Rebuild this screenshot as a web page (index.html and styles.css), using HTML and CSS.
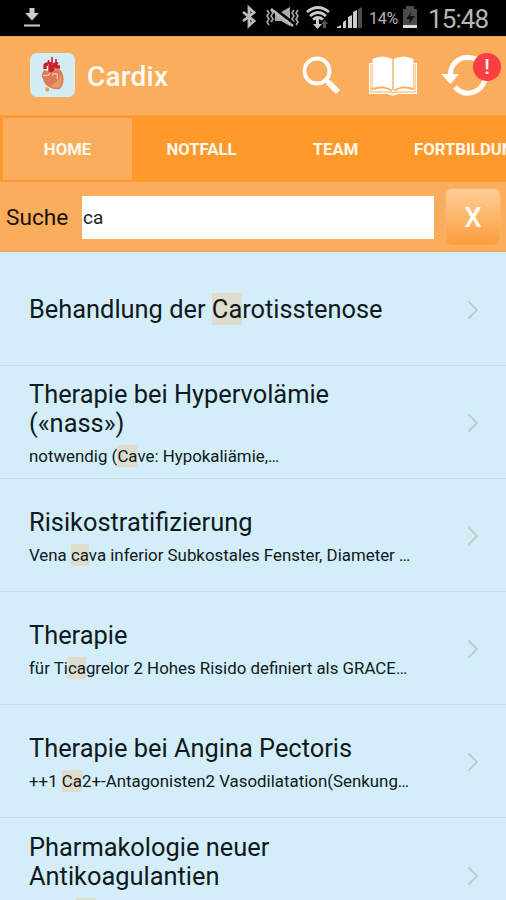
FILE: index.html
```html
<!DOCTYPE html>
<html lang="de">
<head>
<meta charset="utf-8">
<title>Cardix</title>
<link rel="stylesheet" href="styles.css">
</head>
<body>
<div class="status">
  <svg class="download" width="18" height="20" viewBox="0 0 18 20"><path d="M6.500 1h5v5h4.300L9 13.500 2.200 6h4.300z" fill="#ccc"/><path d="M1 18.500h16" stroke="#ccc" stroke-width="2"/></svg>
  <svg class="indicators" width="132" height="28" viewBox="0 0 132 28">
    <path d="M2 11l11 9-5 4.500V7l5 4.500L2 20" fill="none" stroke="#bbb" stroke-width="2.800"/>
    <g fill="none" stroke="#aaa" stroke-width="1.600"><path d="M26 9l2 3-2 3 2 3-2 3 2 3M30 9l2 3-2 3 2 3-2 3M53 9l-2 3 2 3-2 3 2 3M57 9l-2 3 2 3-2 3 2 3-2 3"/></g>
    <path d="M34 11h6l9-5v19l-9-5h-6z" fill="#aaa"/><path d="M32 7l22 17" stroke="#000" stroke-width="3.500"/><path d="M30 8l22 17" stroke="#bbb" stroke-width="2.400"/>
    <g fill="none" stroke="#ccc" stroke-width="2.700"><path d="M66 11q11-9 22 0M69 15q8-7 16 0M72 18.500q5-4 10 0"/></g>
    <path d="M75 18h3v5h3l-4.500 5-4.500-5h3z" fill="#ccc"/><path d="M82 27v-4h-2l3.500-4 3.500 4h-2v4z" fill="#555"/>
    <path d="M96 27v-1l4-2v3zM102 27v-6l3-2v8zM107 27V16l4-2v13zM112 27V11l4-2v18z" fill="#ccc"/><path d="M117 27V8l4-2v21z" fill="#4b4b4b"/>
  </svg>
  <span class="percent">14%</span>
  <svg class="battery" width="16" height="24" viewBox="0 0 16 24"><path d="M1 3h3V0h8v3h3v19H1z" fill="#4b4b4b"/><path d="M10 5l-6 8h4l-1 5 6-8H8z" fill="#111"/><path d="M1 19h14v3H1z" fill="#ddd"/></svg>
  <span class="clock">15:48</span>
</div>

<header class="header">
  <svg class="logo" width="45" height="44" viewBox="0 0 45 44">
    <rect width="45" height="44" rx="7" fill="#d3edf5"/>
    <path d="M15 16v-3q0-2 3-2M20 21V9M23 19v-6q2-3 5-2M25 14h5" fill="none" stroke="#c9202c" stroke-width="3.400"/>
    <path d="M22 4v7M26 6v5M18.500 7v4" stroke="#c9202c" stroke-width="1.600"/>
    <path d="M14 17q-4 5-1 9 1 5 6 8 5 3 11 2 5-6 3-14-1-5-5-6-4 0-6 4-4-2-8-3z" fill="#e07a55"/>
    <path d="M20 33q6 3 10 1 3-6 1-12-4 8-11 11z" fill="#e99a6b"/>
    <path d="M22 22q2-2 5-1 1 2 0 5M13 22q5 2 7-2" fill="none" stroke="#f7cbb0" stroke-width="1.200"/>
    <path d="M16 34l3 1 0 3-2 1-2-2z" fill="#e6a349"/>
  </svg>
  <h1 class="brand">Cardix</h1>
  <svg class="search-icon" width="40" height="40" viewBox="0 0 40 40" fill="none" stroke="#fff"><circle cx="15" cy="15" r="12.500" stroke-width="3.800"/><path d="M24 24l3 3" stroke-width="4"/><path d="M26 26l10 10" stroke-width="6"/></svg>
  <svg class="book-icon" width="50" height="40" viewBox="0 0 50 40">
    <path d="M1 7h3v27q11-4 20 0h2q9-4 20 0V7h3v31H30q-5 3-10 0H1z" fill="#fff"/>
    <path d="M3 8v28h18q4 2 8 0h18V8" fill="none" stroke="#fbad5e" stroke-width="1"/>
    <path d="M4.500 3Q15-2 24.300 3v31q-9-6-19.800-2zM25.700 3Q35-2 45.500 3v29q-10.800-4-19.800 2z" fill="#fff"/>
    <path d="M6 33q10-4 18 2M44 33q-10-4-18 2" fill="none" stroke="#fbad5e" stroke-width="1.500"/>
  </svg>
  <div class="refresh">
    <svg width="50" height="44" viewBox="0 0 50 44"><path d="M9.500 21C9 11 17 3.500 26 3.500q8 0 12 3M14 33Q22 42 33 38q8-3 11-12" fill="none" stroke="#fff" stroke-width="5"/><path d="M0 20h18l-8.500 10z" fill="#fff"/></svg>
    <span class="badge">!</span>
  </div>
</header>

<nav class="tabs">
  <a class="tab active">HOME</a>
  <a class="tab">NOTFALL</a>
  <a class="tab">TEAM</a>
  <a class="tab">FORTBILDUNG</a>
</nav>

<div class="search">
  <label class="search-label" for="q">Suche</label>
  <input class="search-input" id="q" value="ca">
  <button class="clear">X</button>
</div>

<main class="results">
  <article class="row"><div class="text"><h2>Behandlung der <mark>Ca</mark>rotisstenose</h2></div><svg class="chevron" width="12" height="20" viewBox="0 0 12 20"><path d="M1.500 1.500L10 10l-8.500 8.500"/></svg></article>
  <article class="row"><div class="text"><h2>Therapie bei Hypervolämie<br>(«nass»)</h2><p>notwendig (<mark>Ca</mark>ve: Hypokaliämie,…</p></div><svg class="chevron" width="12" height="20" viewBox="0 0 12 20"><path d="M1.500 1.500L10 10l-8.500 8.500"/></svg></article>
  <article class="row"><div class="text"><h2>Risikostratifizierung</h2><p>Vena <mark>ca</mark>va inferior Subkostales Fenster, Diameter …</p></div><svg class="chevron" width="12" height="20" viewBox="0 0 12 20"><path d="M1.500 1.500L10 10l-8.500 8.500"/></svg></article>
  <article class="row"><div class="text"><h2>Therapie</h2><p>für Ti<mark>ca</mark>grelor 2 Hohes Risido definiert als GRACE…</p></div><svg class="chevron" width="12" height="20" viewBox="0 0 12 20"><path d="M1.500 1.500L10 10l-8.500 8.500"/></svg></article>
  <article class="row"><div class="text"><h2>Therapie bei Angina Pectoris</h2><p>++1 <mark>Ca</mark>2+-Antagonisten2 Vasodilatation(Senkung…</p></div><svg class="chevron" width="12" height="20" viewBox="0 0 12 20"><path d="M1.500 1.500L10 10l-8.500 8.500"/></svg></article>
  <article class="row"><div class="text"><h2>Pharmakologie neuer<br>Antikoagulantien</h2><p class="snippet"><mark class="hit"></mark></p></div><svg class="chevron" width="12" height="20" viewBox="0 0 12 20"><path d="M1.500 1.500L10 10l-8.500 8.500"/></svg></article>
</main>
</body>
</html>
```

FILE: styles.css
```css
* { box-sizing: border-box; }
body { margin: 0; width: 506px; height: 900px; overflow: hidden; font-family: Roboto, sans-serif; background: #d3eef9; color: #101820; }
svg { display: block; flex: none; }
.status { height: 36px; background: #000; display: flex; align-items: center; color: #b5b5b5; }
.download { margin-left: 23px; margin-top: -3px; }
.indicators { margin-left: 200px; margin-top: -6px; }
.percent { width: 29px; margin-left: -4px; font-size: 16px; letter-spacing: -0.3px; white-space: nowrap; }
.battery { margin-left: 4px; margin-top: -1px; }
.clock { margin-left: 10px; font-size: 26px; letter-spacing: -0.9px; margin-top: 2px; }

.header { height: 79px; background: #fbad5e; display: flex; align-items: center; border-top: 1px solid #eba34f; }
.logo { margin-left: 30px; margin-top: -2px; }
.brand { margin: 2px 0 0 12px; width: 203px; font-size: 28px; font-weight: 500; color: #fffaf0; line-height: 32px; letter-spacing: 0.2px; }
.search-icon { margin-left: 12px; }
.book-icon { margin-left: 26px; }
.refresh { position: relative; margin-left: 23px; }
.badge { position: absolute; left: 32px; top: -1px; width: 28px; height: 28px; border-radius: 50%; background: #fb3e43; color: #fff; font-size: 21px; font-weight: 500; line-height: 28px; text-align: center; }

.tabs { height: 67px; background: #ff992b; display: flex; padding: 2px 0 2px 3px; overflow: hidden; border-top: 1px solid #fd9f3c; }
.tab { flex: none; width: 129px; margin-right: 5px; display: flex; align-items: center; justify-content: center; color: #fff8ec; font-size: 16.7px; font-weight: 700; }
.tab.active { background: #fbad5e; }

.search { height: 70px; background: #fbad5e; display: flex; align-items: center; border-bottom: 1px solid #efab63; }
.search-label { width: 82px; padding: 2px 0 0 6px; font-size: 22.7px; color: #1a1208; }
.search-input { width: 352px; height: 43px; margin-top: 1px; border: 0; padding: 1px 0 0 1px; font: 19px Roboto, sans-serif; color: #222; background: #fff; outline: none; }
.clear { width: 56px; height: 58px; margin: 1px 0 0 11px; border: 1px solid #fbb269; border-radius: 7px; padding: 2px 0 0; background: linear-gradient(#ffcd98, #fb9e3c); color: #fff; font: 500 27px Roboto, sans-serif; }

.results { padding-top: 1px; }
.row { height: 113.1px; border-bottom: 1px solid #c3dfe9; display: flex; align-items: center; padding-left: 29px; }
.text { width: 438px; }
h2 { margin: 0; font-size: 25.4px; font-weight: 400; line-height: 29px; white-space: nowrap; }
p { margin: 7px 0 -3px; font-size: 16.88px; line-height: 22px; white-space: nowrap; }
mark { color: inherit; background: #dedccb; padding: 1px 0; }
.chevron { fill: none; stroke: #c7c8cb; stroke-width: 2; margin-top: 2px; }
.snippet { height: 22px; padding-left: 47px; }
.hit { display: block; width: 20px; height: 22px; }
```
